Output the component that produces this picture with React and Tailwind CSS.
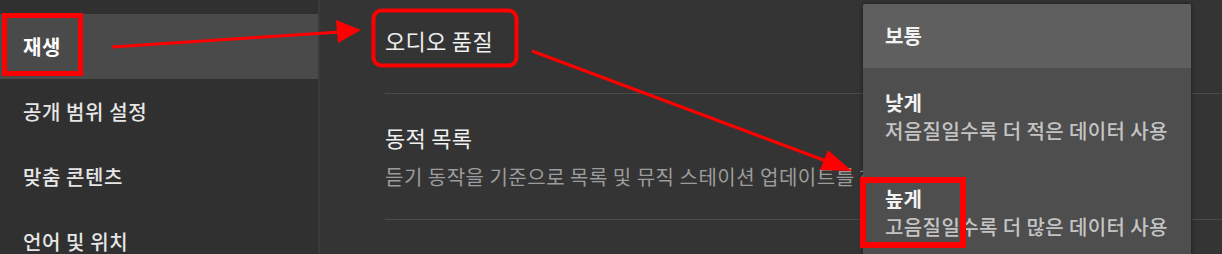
import React from "react";

const sideItems = [
  { label: "재생", active: true },
  { label: "공개 범위 설정" },
  { label: "맞춤 콘텐츠" },
  { label: "언어 및 위치" },
];

const qualityOptions = [
  { title: "낮게", desc: "저음질일수록 더 적은 데이터 사용" },
  { title: "높게", desc: "고음질일수록 더 많은 데이터 사용" },
];

function Annotations() {
  return (
    <svg
      className="absolute inset-0 pointer-events-none"
      width="1222"
      height="254"
      viewBox="0 0 1222 254"
    >
      {/* box around 재생 */}
      <rect x="4.5" y="15.5" width="76" height="58" fill="none" stroke="#ff0000" strokeWidth="5" />
      {/* arrow to 오디오 품질 */}
      <line x1="112" y1="47" x2="340" y2="32" stroke="#ff0000" strokeWidth="3" />
      <polygon points="361,30 338,43 336,20" fill="#ff0000" />
      {/* rounded box around 오디오 품질 */}
      <rect x="373.5" y="10.5" width="143" height="55" rx="8" fill="none" stroke="#ff0000" strokeWidth="4" />
      {/* arrow to 높게 */}
      <line x1="532" y1="51" x2="826" y2="161" stroke="#ff0000" strokeWidth="3" />
      <polygon points="852,171 820,170 828,150" fill="#ff0000" />
      {/* box around 높게 */}
      <rect x="863" y="180" width="100" height="65" fill="none" stroke="#ff0000" strokeWidth="6" />
    </svg>
  );
}

export default function App() {
  return (
    <div className="relative w-[1222px] h-[254px] overflow-hidden flex bg-[#343434] font-['Noto_Sans_CJK_KR',sans-serif] text-[#eeeeee]">
      {/* sidebar */}
      <div className="w-[320px] shrink-0 bg-[#303030] border-r-2 border-[#3a3a3a] flex flex-col">
        <div className="h-[14px] shrink-0" />
        {sideItems.map((it) => (
          <div
            key={it.label}
            className={
              "h-[65px] shrink-0 flex items-center pl-[23px] text-[20px] tracking-[0.6px] " +
              (it.active ? "bg-[#4a4a4a] font-bold text-white" : "font-medium text-[#e6e6e6]")
            }
          >
            {it.label}
          </div>
        ))}
      </div>

      {/* settings list */}
      <div className="flex-1 pl-[65px]">
        <div className="h-[94px] pt-[26px] border-b border-[#4a4a4a] text-[22px] leading-[28px] tracking-[0.3px] text-[#f0f0f0]">
          오디오 품질
        </div>
        <div className="h-[126px] pt-[29px] border-b border-[#4a4a4a]">
          <div className="text-[22px] leading-[28px] tracking-[0.3px] text-[#f0f0f0]">동적 목록</div>
          <div className="mt-[13px] text-[20px] leading-[26px] tracking-[0.5px] text-[#9c9c9c] whitespace-nowrap">
            듣기 동작을 기준으로 목록 및 뮤직 스테이션 업데이트를 허용
          </div>
        </div>
      </div>

      {/* dropdown */}
      <div className="absolute left-[863px] top-[4px] w-[328px] h-[270px] rounded-[2px] bg-[#4e4e4e] shadow-[0_0_4px_rgba(0,0,0,0.5)] overflow-hidden">
        <div className="h-[64px] bg-[#5f5f5f] flex items-center pl-[22px] text-[20px] font-bold text-[#f2f2f2]">
          보통
        </div>
        {qualityOptions.map((o) => (
          <div key={o.title} className="h-[96px] pl-[22px] pt-[22px]">
            <div className="text-[20px] leading-[26px] font-bold text-[#f2f2f2]">{o.title}</div>
            <div className="mt-[2px] text-[20px] leading-[26px] tracking-[0.4px] font-medium text-[#c4c4c4] whitespace-nowrap">
              {o.desc}
            </div>
          </div>
        ))}
      </div>

      <Annotations />
    </div>
  );
}
